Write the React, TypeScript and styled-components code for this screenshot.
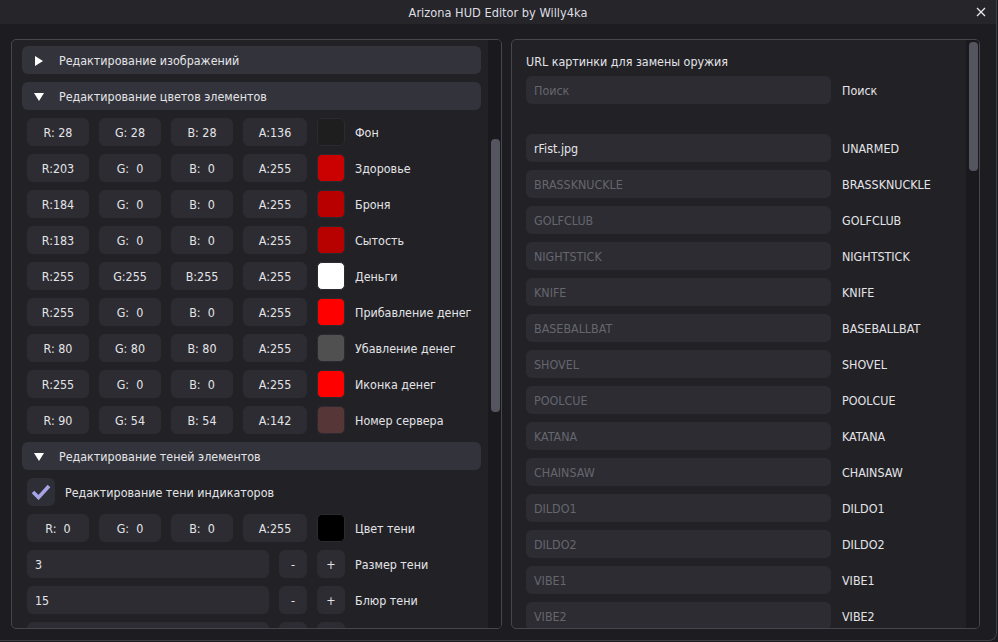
import React from "react";
import styled, { createGlobalStyle } from "styled-components";

const GlobalStyle = createGlobalStyle`
  html, body {
    margin: 0;
    padding: 0;
    background: #1b1b1f;
  }
  body {
    font-family: "DejaVu Sans Condensed", "DejaVu Sans", "Noto Sans", sans-serif;
    font-stretch: condensed;
    font-size: 12.4px;
    color: #e4e4e8;
  }
`;

const Window = styled.div`
  width: 997px;
  height: 641px;
  box-sizing: border-box;
  border-right: 1px solid #3e3e46;
  border-bottom: 1px solid #3e3e46;
  border-bottom-right-radius: 8px;
  background: #1d1d21;
  display: flex;
  flex-direction: column;
  overflow: hidden;
`;

const TitleBar = styled.div`
  height: 24px;
  flex: none;
  background: #25252a;
  display: grid;
  grid-template-columns: 1fr auto 1fr;
  align-items: center;
`;

const Title = styled.span`
  font-size: 12.7px;
  color: #dedee2;
`;

const CloseButton = styled.span`
  justify-self: end;
  margin-right: 10px;
  width: 10px;
  height: 10px;
  display: flex;
`;

const Body = styled.div`
  flex: 1;
  display: flex;
  gap: 9px;
  padding: 15px 16px 11px 11px;
  min-height: 0;
`;

const Panel = styled.div<{ $width?: number }>`
  ${(p) => (p.$width ? `width: ${p.$width}px;` : "flex: 1;")}
  box-sizing: border-box;
  border: 1px solid #46464e;
  border-radius: 5px;
  background: #212126;
  display: flex;
  overflow: hidden;
`;

const Content = styled.div<{ $pad: string }>`
  flex: 1;
  min-width: 0;
  padding: ${(p) => p.$pad};
  display: flex;
  flex-direction: column;
  gap: 8px;
  overflow: hidden;
`;

const Track = styled.div`
  width: 13px;
  flex: none;
  background: #1a1a1e;
  padding-left: 3px;
  box-sizing: border-box;
`;

const Thumb = styled.div<{ $top: number; $height: number }>`
  width: 9px;
  margin-top: ${(p) => p.$top}px;
  height: ${(p) => p.$height}px;
  border-radius: 4px;
  background: #55555f;
`;

const Header = styled.div`
  height: 28px;
  flex: none;
  border-radius: 6px;
  background: #33333b;
  display: flex;
  align-items: center;
  padding: 1px 0 0 12px;
  box-sizing: border-box;
  gap: 15px;
`;

const Arrow = styled.span`
  width: 10px;
  display: flex;
  justify-content: center;
`;

const Row = styled.div<{ $flush?: boolean }>`
  height: 28px;
  flex: none;
  display: flex;
  align-items: center;
  gap: ${(p) => (p.$flush ? 11 : 10)}px;
  padding-left: ${(p) => (p.$flush ? 0 : 5)}px;
`;

const Field = styled.div<{ $width: number; $center?: boolean; $muted?: boolean }>`
  width: ${(p) => p.$width}px;
  height: 28px;
  flex: none;
  box-sizing: border-box;
  border-radius: 6px;
  background: #2c2c32;
  display: flex;
  align-items: center;
  justify-content: ${(p) => (p.$center ? "center" : "flex-start")};
  padding: 1px 8px 0;
  white-space: pre;
  color: ${(p) => (p.$muted ? "#66666e" : "#e4e4e8")};
`;

const Swatch = styled.div<{ $color: string }>`
  width: 28px;
  height: 28px;
  flex: none;
  box-sizing: border-box;
  border-radius: 5px;
  border: 1px solid #2a2a30;
  background: ${(p) => p.$color};
`;

const Button = styled.div`
  width: 28px;
  height: 28px;
  flex: none;
  border-radius: 6px;
  background: #2c2c32;
  display: flex;
  align-items: center;
  justify-content: center;
`;

const Check = styled.div`
  width: 28px;
  height: 28px;
  flex: none;
  border-radius: 6px;
  background: #2e2e36;
  display: flex;
  align-items: center;
  justify-content: center;
`;

const Label = styled.span`
  white-space: nowrap;
  padding-top: 1px;
`;

const Caption = styled.div`
  height: 14px;
  line-height: 16px;
  flex: none;
`;

const Spacer = styled.div`
  height: 14px;
  flex: none;
`;

const pad = (n: number) => String(n).padStart(3, " ");

const colors: [number, number, number, number, string, string][] = [
  [28, 28, 28, 136, "#1e1e1f", "Фон"],
  [203, 0, 0, 255, "#cb0000", "Здоровье"],
  [184, 0, 0, 255, "#b80000", "Броня"],
  [183, 0, 0, 255, "#b70000", "Сытость"],
  [255, 255, 255, 255, "#ffffff", "Деньги"],
  [255, 0, 0, 255, "#ff0000", "Прибавление денег"],
  [80, 80, 80, 255, "#505050", "Убавление денег"],
  [255, 0, 0, 255, "#ff0000", "Иконка денег"],
  [90, 54, 54, 142, "#573637", "Номер сервера"],
];

const weapons = [
  "BRASSKNUCKLE",
  "GOLFCLUB",
  "NIGHTSTICK",
  "KNIFE",
  "BASEBALLBAT",
  "SHOVEL",
  "POOLCUE",
  "KATANA",
  "CHAINSAW",
  "DILDO1",
  "DILDO2",
  "VIBE1",
  "VIBE2",
];

const RightArrow = () => (
  <svg width="8" height="10" viewBox="0 0 8 10">
    <path d="M0 0 L8 5 L0 10 Z" fill="#ffffff" />
  </svg>
);

const DownArrow = () => (
  <svg width="10" height="8" viewBox="0 0 10 8">
    <path d="M0 0 L10 0 L5 8 Z" fill="#ffffff" />
  </svg>
);

const ColorRow: React.FC<{ r: number; g: number; b: number; a: number; swatch: string; label: string }> = ({
  r,
  g,
  b,
  a,
  swatch,
  label,
}) => (
  <Row>
    <Field $width={62} $center>{`R:${pad(r)}`}</Field>
    <Field $width={62} $center>{`G:${pad(g)}`}</Field>
    <Field $width={62} $center>{`B:${pad(b)}`}</Field>
    <Field $width={64} $center>{`A:${pad(a)}`}</Field>
    <Swatch $color={swatch} />
    <Label>{label}</Label>
  </Row>
);

const StepRow: React.FC<{ value?: string; label?: string; minus?: string; plus?: string }> = ({
  value,
  label,
  minus,
  plus,
}) => (
  <Row>
    <Field $width={242}>{value}</Field>
    <Button>{minus}</Button>
    <Button>{plus}</Button>
    <Label>{label}</Label>
  </Row>
);

const App: React.FC = () => {
  return (
    <>
      <GlobalStyle />
      <Window>
        <TitleBar>
          <span />
          <Title>Arizona HUD Editor by Willy4ka</Title>
          <CloseButton>
            <svg width="10" height="10" viewBox="0 0 10 10">
              <path d="M1 1 L9 9 M9 1 L1 9" stroke="#e8e8ec" strokeWidth="1.3" />
            </svg>
          </CloseButton>
        </TitleBar>
        <Body>
          <Panel $width={491}>
            <Content $pad="6px 7px 0 10px">
              <Header>
                <Arrow>
                  <RightArrow />
                </Arrow>
                Редактирование изображений
              </Header>
              <Header>
                <Arrow>
                  <DownArrow />
                </Arrow>
                Редактирование цветов элементов
              </Header>
              {colors.map(([r, g, b, a, swatch, label]) => (
                <ColorRow key={label} r={r} g={g} b={b} a={a} swatch={swatch} label={label} />
              ))}
              <Header>
                <Arrow>
                  <DownArrow />
                </Arrow>
                Редактирование теней элементов
              </Header>
              <Row>
                <Check>
                  <svg width="20" height="16" viewBox="0 0 20 16">
                    <path d="M2 8 L7.5 13.5 L18 2" stroke="#a6a3e6" strokeWidth="3.6" fill="none" />
                  </svg>
                </Check>
                <Label>Редактирование тени индикаторов</Label>
              </Row>
              <ColorRow r={0} g={0} b={0} a={255} swatch="#000000" label="Цвет тени" />
              <StepRow value="3" label="Размер тени" minus="-" plus="+" />
              <StepRow value="15" label="Блюр тени" minus="-" plus="+" />
              <StepRow />
            </Content>
            <Track>
              <Thumb $top={99} $height={273} />
            </Track>
          </Panel>
          <Panel>
            <Content $pad="14px 0 0 14px">
              <Caption>URL картинки для замены оружия</Caption>
              <Row $flush>
                <Field $width={305} $muted>
                  Поиск
                </Field>
                <Label>Поиск</Label>
              </Row>
              <Spacer />
              <Row $flush>
                <Field $width={305}>rFist.jpg</Field>
                <Label>UNARMED</Label>
              </Row>
              {weapons.map((w) => (
                <Row key={w} $flush>
                  <Field $width={305} $muted>
                    {w}
                  </Field>
                  <Label>{w}</Label>
                </Row>
              ))}
            </Content>
            <Track>
              <Thumb $top={2} $height={129} />
            </Track>
          </Panel>
        </Body>
      </Window>
    </>
  );
};

export default App;
